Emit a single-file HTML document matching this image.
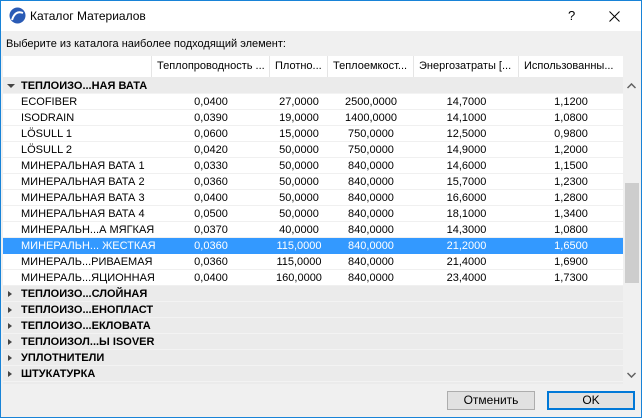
<!DOCTYPE html><html><head><style>
*{margin:0;padding:0;box-sizing:border-box}
body{width:642px;height:418px;overflow:hidden;background:#f0f0f0;font-family:"Liberation Sans",sans-serif;font-size:11px;color:#000;position:relative}
.win{position:absolute;left:0;top:0;width:642px;height:418px;border:1px solid #1883d7}
.title{position:absolute;left:1px;top:1px;width:640px;height:30px;background:#fff}
.abs{position:absolute}
.row{position:absolute;left:3px;width:620px;height:16px;line-height:16px;white-space:nowrap}
.d{background:#fff;border-bottom:1px solid #f0f0f0}
.g{background:#ebebeb;border-bottom:1px solid #f3f3f3;font-weight:bold}
.c{position:absolute;top:0;text-align:center}
.n{left:18px}
.sel{background:#3399ff;color:#fff}
.tri{position:absolute;left:5px;top:5px;width:0;height:0;border-top:3px solid transparent;border-bottom:3px solid transparent;border-left:4px solid #444}
.trd{position:absolute;left:4px;top:6px;width:0;height:0;border-left:4px solid transparent;border-right:4px solid transparent;border-top:4px solid #444}
.h{position:absolute;top:56px;height:21px;line-height:21px;background:#fff;border-right:1px solid #e5e5e5;padding-left:5px;white-space:nowrap;overflow:hidden}
.btn{position:absolute;top:391px;height:19px;background:#e1e1e1;border:1px solid #adadad;text-align:center;line-height:17px;font-size:12px}
</style></head><body><div class="win"></div>
<div class="title"></div>
<svg class="abs" style="left:9px;top:7px" width="17" height="17" viewBox="0 0 17 17"><circle cx="8.5" cy="8.5" r="8" fill="#2a5bb5"/><path d="M3 13 Q6 3 14 6" stroke="#fff" stroke-width="2" fill="none"/></svg>
<div class="abs" style="left:30px;top:9px;font-size:12px">Каталог Материалов</div>
<div class="abs" style="left:568px;top:8px;font-size:13px">?</div>
<svg class="abs" style="left:609px;top:11px" width="11" height="11"><path d="M0.5 0.5L10.5 10.5M10.5 0.5L0.5 10.5" stroke="#000" stroke-width="1"/></svg>
<div class="abs" style="left:6px;top:38px">Выберите из каталога наиболее подходящий элемент:</div>
<div class="abs" style="left:3px;top:56px;width:620px;height:328px;background:#ebebeb"></div>
<div class="h" style="left:3px;width:149px"></div>
<div class="h" style="left:152px;width:118px">Теплопроводность ...</div>
<div class="h" style="left:270px;width:58px">Плотно...</div>
<div class="h" style="left:328px;width:86px">Теплоемкост...</div>
<div class="h" style="left:414px;width:105px">Энергозатраты [...</div>
<div class="h" style="left:519px;width:104px;border-right:none">Использованны...</div>
<div class="abs" style="left:623px;top:56px;width:18px;height:21px;background:#f0f0f0"></div>
<div class="row g" style="top:78px"><span class="trd"></span><span class="c n">ТЕПЛОИЗО...НАЯ ВАТА</span></div>
<div id="rows"></div>
<div class="row d" style="top:94px"><span class="c n">ECOFIBER</span><span class="c" style="left:149px;width:118px">0,0400</span><span class="c" style="left:267px;width:58px">27,0000</span><span class="c" style="left:325px;width:86px">2500,0000</span><span class="c" style="left:411px;width:105px">14,7000</span><span class="c" style="left:516px;width:104px">1,1200</span></div>
<div class="row d" style="top:110px"><span class="c n">ISODRAIN</span><span class="c" style="left:149px;width:118px">0,0390</span><span class="c" style="left:267px;width:58px">19,0000</span><span class="c" style="left:325px;width:86px">1400,0000</span><span class="c" style="left:411px;width:105px">14,1000</span><span class="c" style="left:516px;width:104px">1,0800</span></div>
<div class="row d" style="top:126px"><span class="c n">LÖSULL 1</span><span class="c" style="left:149px;width:118px">0,0600</span><span class="c" style="left:267px;width:58px">15,0000</span><span class="c" style="left:325px;width:86px">750,0000</span><span class="c" style="left:411px;width:105px">12,5000</span><span class="c" style="left:516px;width:104px">0,9800</span></div>
<div class="row d" style="top:142px"><span class="c n">LÖSULL 2</span><span class="c" style="left:149px;width:118px">0,0420</span><span class="c" style="left:267px;width:58px">50,0000</span><span class="c" style="left:325px;width:86px">750,0000</span><span class="c" style="left:411px;width:105px">14,9000</span><span class="c" style="left:516px;width:104px">1,2000</span></div>
<div class="row d" style="top:158px"><span class="c n">МИНЕРАЛЬНАЯ ВАТА 1</span><span class="c" style="left:149px;width:118px">0,0330</span><span class="c" style="left:267px;width:58px">50,0000</span><span class="c" style="left:325px;width:86px">840,0000</span><span class="c" style="left:411px;width:105px">14,6000</span><span class="c" style="left:516px;width:104px">1,1500</span></div>
<div class="row d" style="top:174px"><span class="c n">МИНЕРАЛЬНАЯ ВАТА 2</span><span class="c" style="left:149px;width:118px">0,0360</span><span class="c" style="left:267px;width:58px">50,0000</span><span class="c" style="left:325px;width:86px">840,0000</span><span class="c" style="left:411px;width:105px">15,7000</span><span class="c" style="left:516px;width:104px">1,2300</span></div>
<div class="row d" style="top:190px"><span class="c n">МИНЕРАЛЬНАЯ ВАТА 3</span><span class="c" style="left:149px;width:118px">0,0400</span><span class="c" style="left:267px;width:58px">50,0000</span><span class="c" style="left:325px;width:86px">840,0000</span><span class="c" style="left:411px;width:105px">16,6000</span><span class="c" style="left:516px;width:104px">1,2800</span></div>
<div class="row d" style="top:206px"><span class="c n">МИНЕРАЛЬНАЯ ВАТА 4</span><span class="c" style="left:149px;width:118px">0,0500</span><span class="c" style="left:267px;width:58px">50,0000</span><span class="c" style="left:325px;width:86px">840,0000</span><span class="c" style="left:411px;width:105px">18,1000</span><span class="c" style="left:516px;width:104px">1,3400</span></div>
<div class="row d" style="top:222px"><span class="c n">МИНЕРАЛЬН...А МЯГКАЯ</span><span class="c" style="left:149px;width:118px">0,0370</span><span class="c" style="left:267px;width:58px">40,0000</span><span class="c" style="left:325px;width:86px">840,0000</span><span class="c" style="left:411px;width:105px">14,3000</span><span class="c" style="left:516px;width:104px">1,0800</span></div>
<div class="row sel" style="top:238px"><span class="c n">МИНЕРАЛЬН... ЖЕСТКАЯ</span><span class="c" style="left:149px;width:118px">0,0360</span><span class="c" style="left:267px;width:58px">115,0000</span><span class="c" style="left:325px;width:86px">840,0000</span><span class="c" style="left:411px;width:105px">21,2000</span><span class="c" style="left:516px;width:104px">1,6500</span></div>
<div class="row d" style="top:254px"><span class="c n">МИНЕРАЛЬ...РИВАЕМАЯ</span><span class="c" style="left:149px;width:118px">0,0360</span><span class="c" style="left:267px;width:58px">115,0000</span><span class="c" style="left:325px;width:86px">840,0000</span><span class="c" style="left:411px;width:105px">21,4000</span><span class="c" style="left:516px;width:104px">1,6900</span></div>
<div class="row d" style="top:270px"><span class="c n">МИНЕРАЛЬ...ЯЦИОННАЯ</span><span class="c" style="left:149px;width:118px">0,0400</span><span class="c" style="left:267px;width:58px">160,0000</span><span class="c" style="left:325px;width:86px">840,0000</span><span class="c" style="left:411px;width:105px">23,4000</span><span class="c" style="left:516px;width:104px">1,7300</span></div>
<div class="row g" style="top:286px"><span class="tri"></span><span class="c n">ТЕПЛОИЗО...СЛОЙНАЯ</span></div>
<div class="row g" style="top:302px"><span class="tri"></span><span class="c n">ТЕПЛОИЗО...ЕНОПЛАСТ</span></div>
<div class="row g" style="top:318px"><span class="tri"></span><span class="c n">ТЕПЛОИЗО...ЕКЛОВАТА</span></div>
<div class="row g" style="top:334px"><span class="tri"></span><span class="c n">ТЕПЛОИЗОЛ...Ы ISOVER</span></div>
<div class="row g" style="top:350px"><span class="tri"></span><span class="c n">УПЛОТНИТЕЛИ</span></div>
<div class="row g" style="top:366px"><span class="tri"></span><span class="c n">ШТУКАТУРКА</span></div>
<div class="abs" style="left:623px;top:77px;width:17px;height:307px;background:#f0f0f0"></div>
<div class="abs" style="left:625px;top:183px;width:14px;height:100px;background:#cdcdcd"></div>
<svg class="abs" style="left:627px;top:83px" width="9" height="6"><path d="M0.5 5L4.5 1L8.5 5" stroke="#606060" stroke-width="1.5" fill="none"/></svg>
<svg class="abs" style="left:627px;top:372px" width="9" height="6"><path d="M0.5 1L4.5 5L8.5 1" stroke="#606060" stroke-width="1.5" fill="none"/></svg>
<div class="btn" style="left:447px;width:88px">Отменить</div>
<div class="btn" style="left:547px;width:88px;border:2px solid #0078d7;line-height:15px">OK</div>
</body></html>
